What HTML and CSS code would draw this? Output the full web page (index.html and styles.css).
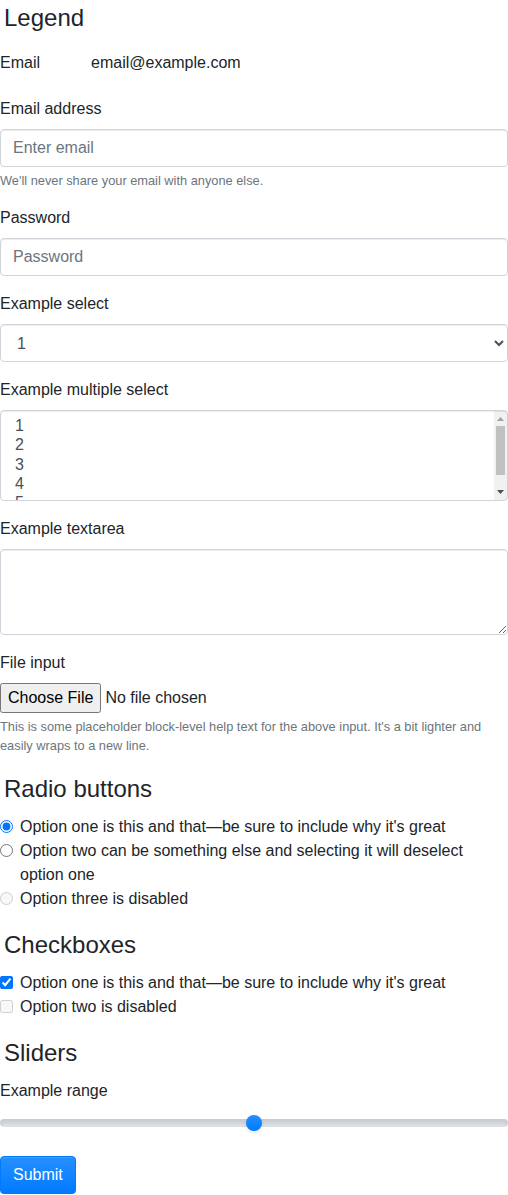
FILE: index.html
```html
<!DOCTYPE html>
<html lang="en">
<head>
<meta charset="utf-8">
<title>Form</title>
<link rel="stylesheet" href="styles.css">
</head>
<body>
<form class="form">
  <fieldset class="section">
    <legend class="legend">Legend</legend>
    <div class="static-row">
      <label class="static-label">Email</label>
      <div class="static-value">email@example.com</div>
    </div>
    <div class="group">
      <label class="label" for="email">Email address</label>
      <input class="control" id="email" type="email" placeholder="Enter email">
      <small class="help">We'll never share your email with anyone else.</small>
    </div>
    <div class="group">
      <label class="label" for="pw">Password</label>
      <input class="control" id="pw" type="password" placeholder="Password">
    </div>
    <div class="group">
      <label class="label" for="sel">Example select</label>
      <select class="control select" id="sel">
        <option>1</option><option>2</option><option>3</option><option>4</option><option>5</option>
      </select>
    </div>
    <div class="group">
      <label class="label" for="msel">Example multiple select</label>
      <select class="control multi" id="msel" multiple>
        <option>1</option><option>2</option><option>3</option><option>4</option><option>5</option>
      </select>
    </div>
    <div class="group">
      <label class="label" for="ta">Example textarea</label>
      <textarea class="control area" id="ta" rows="3"></textarea>
    </div>
    <div class="group">
      <label class="label" for="file">File input</label>
      <input class="file" id="file" type="file">
      <small class="help">This is some placeholder block-level help text for the above input. It's a bit lighter and easily wraps to a new line.</small>
    </div>
  </fieldset>
  <fieldset class="section group">
    <legend class="legend">Radio buttons</legend>
    <div class="check">
      <input class="check-input" type="radio" name="r" id="r1" checked>
      <label class="check-label" for="r1">Option one is this and that—be sure to include why it's great</label>
    </div>
    <div class="check">
      <input class="check-input" type="radio" name="r" id="r2">
      <label class="check-label" for="r2">Option two can be something else and selecting it will deselect option one</label>
    </div>
    <div class="check">
      <input class="check-input" type="radio" name="r" id="r3" disabled>
      <label class="check-label" for="r3">Option three is disabled</label>
    </div>
  </fieldset>
  <fieldset class="section group">
    <legend class="legend">Checkboxes</legend>
    <div class="check">
      <input class="check-input" type="checkbox" id="c1" checked>
      <label class="check-label" for="c1">Option one is this and that—be sure to include why it's great</label>
    </div>
    <div class="check">
      <input class="check-input" type="checkbox" id="c2" disabled>
      <label class="check-label" for="c2">Option two is disabled</label>
    </div>
  </fieldset>
  <fieldset class="section slider-section">
    <legend class="legend">Sliders</legend>
    <label class="label" for="range">Example range</label>
    <input class="range" type="range" id="range" min="0" max="100" value="50">
  </fieldset>
  <button class="btn" type="submit">Submit</button>
</form>
</body>
</html>
```
FILE: styles.css
```css
* { box-sizing: border-box; }
html, body { margin: 0; padding: 0; }
body {
  font-family: "Liberation Sans", Arial, sans-serif;
  font-size: 16px;
  line-height: 1.5;
  color: #212529;
  background: #fff;
}
.form { margin: 0; }
.section {
  margin: 0;
  padding: 0;
  border: 0;
  min-width: 0;
}
.legend {
  font-size: 24px;
  line-height: 36px;
  padding: 0 0 0 4px;
  margin: 0 0 8px;
  float: none;
  width: 100%;
}
.static-row {
  display: grid;
  grid-template-columns: 91px 1fr;
  margin-bottom: 15px;
}
.static-label { padding: 7px 0; }
.static-value { padding: 7px 0; color: #212529; }
.group { margin-bottom: 16px; }
.label { display: inline-block; margin-bottom: 8px; }
.control {
  display: block;
  width: 100%;
  height: 38px;
  padding: 6px 12px;
  font-family: inherit;
  font-size: 16px;
  line-height: 1.5;
  color: #495057;
  background: #fff;
  border: 1px solid #ced4da;
  border-radius: 4px;
  box-shadow: inset 0 1px 1px rgba(0,0,0,.075);
  margin: 0;
}
.control::placeholder { color: #6c757d; opacity: 1; }
.select { padding-left: 12px; }
.multi {
  height: auto;
  padding: 6px 12px;
  line-height: 1.2;
  scrollbar-width: none;
  background-color: #fff;
  background-image:
    url("data:image/svg+xml,%3Csvg xmlns='http://www.w3.org/2000/svg' viewBox='0 0 7 4'%3E%3Cpath d='M0 4L3.5 0L7 4Z' fill='%23a3a3a3'/%3E%3C/svg%3E"),
    url("data:image/svg+xml,%3Csvg xmlns='http://www.w3.org/2000/svg' viewBox='0 0 7 4'%3E%3Cpath d='M0 0L7 0L3.5 4Z' fill='%23505050'/%3E%3C/svg%3E"),
    linear-gradient(#c1c1c1, #c1c1c1),
    linear-gradient(#f1f1f1, #f1f1f1);
  background-repeat: no-repeat;
  background-origin: padding-box;
  background-size: 7px 4px, 7px 4px, 9px 49px, 13px 100%;
  background-position: right 3px top 6px, right 3px bottom 6px, right 2px top 15px, right 0 top 0;
}
.area { height: auto; resize: vertical; overflow: auto; }
.file {
  display: block;
  width: 100%;
  font-family: inherit;
  font-size: 16px;
  color: #212529;
  margin: 0;
}
.file::file-selector-button {
  font-family: inherit;
  font-size: 16px;
  padding: 4px 6px;
  margin-right: 4px;
}
.help {
  display: block;
  margin-top: 4px;
  font-size: 12.8px;
  line-height: 1.5;
  color: #6c757d;
}
.check {
  position: relative;
  display: block;
  padding-left: 20px;
}
.check-input {
  position: absolute;
  margin: 5px 0 0 -20px;
}
.check-label { display: inline; }
.slider-section { margin-bottom: 22px; }
.range {
  display: block;
  width: 100%;
  height: 22.4px;
  padding: 0;
  margin: 0;
  background: transparent;
  -webkit-appearance: none;
  appearance: none;
}
.range:focus { outline: none; }
.range::-webkit-slider-runnable-track {
  width: 100%;
  height: 8px;
  background: #dee2e6;
  border-radius: 16px;
  box-shadow: inset 0 4px 4px rgba(0,0,0,.1);
  border: 0;
}
.range::-webkit-slider-thumb {
  -webkit-appearance: none;
  appearance: none;
  width: 16px;
  height: 16px;
  margin-top: -4px;
  border: 0;
  border-radius: 16px;
  background: #007bff linear-gradient(180deg, #268fff, #007bff) repeat-x;
  box-shadow: 0 1.6px 4px rgba(0,0,0,.1);
}
.btn {
  display: inline-block;
  font-family: inherit;
  font-size: 16px;
  line-height: 1.5;
  padding: 6px 12px;
  color: #fff;
  border: 1px solid #007bff;
  border-radius: 4px;
  background: #007bff linear-gradient(180deg, #268fff, #007bff) repeat-x;
  box-shadow: inset 0 1px 0 rgba(255,255,255,.15), 0 1px 1px rgba(0,0,0,.075);
  cursor: pointer;
  margin: 0;
}
```
